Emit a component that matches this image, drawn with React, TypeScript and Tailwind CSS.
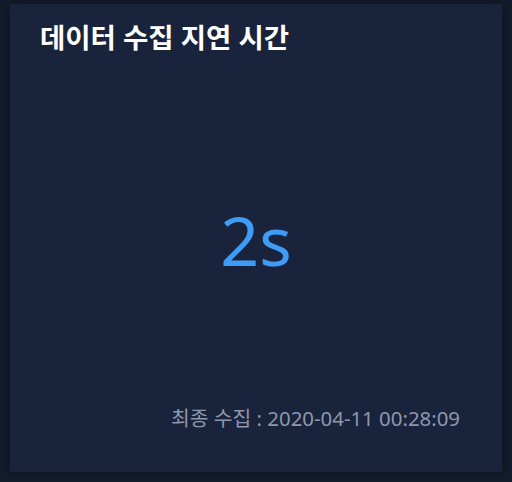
import React from "react";

export default function App() {
  return (
    <div
      className="w-[512px] h-[482px] bg-[#141b2b] pt-[4px] pl-[10px]"
      style={{ fontFamily: '"Noto Sans", "Noto Sans CJK KR", sans-serif' }}
    >
      <div className="w-[492px] h-[468px] bg-[#19233b] shadow-[0_0_10px_rgba(0,0,0,0.35)] flex flex-col pl-[30px] pr-[42px] pt-[14px] pb-[40px]">
        <div className="text-white font-bold text-[27.5px] leading-[40px]">데이터 수집 지연 시간</div>
        <div className="flex-1 flex items-center justify-center pl-[12px] pt-[18px]">
          <span className="text-[#3f9cf6] text-[68px] leading-none">2s</span>
        </div>
        <div className="text-right text-[#8f97ad] text-[20.4px] leading-[28px]">최종 수집 : 2020-04-11 00:28:09</div>
      </div>
    </div>
  );
}
